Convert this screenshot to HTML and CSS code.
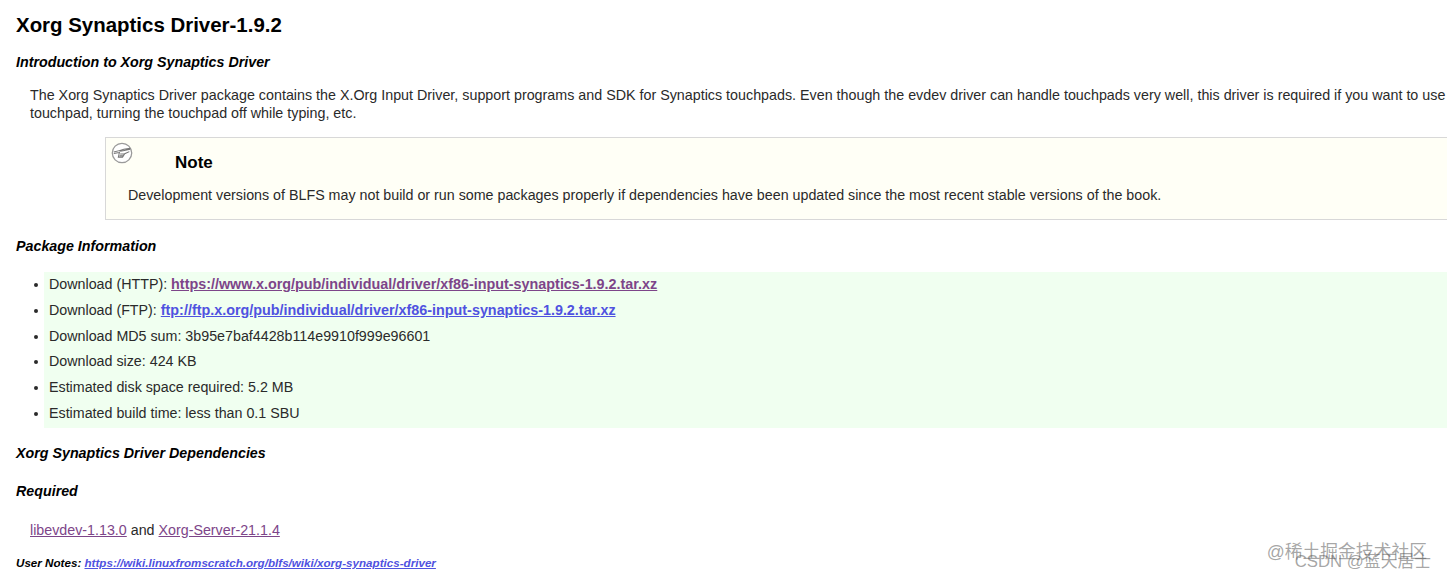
FILE: index.html
```html
<!DOCTYPE html>
<html lang="en">
<head>
<meta charset="utf-8">
<title>Xorg Synaptics Driver-1.9.2</title>
<link rel="stylesheet" href="styles.css">
</head>
<body>
<main class="page">
<h1 class="title">Xorg Synaptics Driver-1.9.2</h1>
<h2 class="sub first">Introduction to Xorg Synaptics Driver</h2>
<p class="para intro">The Xorg Synaptics Driver package contains the X.Org Input Driver, support programs and SDK for Synaptics touchpads. Even though the evdev driver can handle touchpads very well, this driver is required if you want to use advanced features such as multitouch, scrolling on the<br>touchpad, turning the touchpad off while typing, etc.</p>
<aside class="note">
<svg class="note-icon" viewBox="0 0 24 24" width="22" height="22" aria-hidden="true">
<circle cx="12" cy="12" r="10.6" fill="#fff" stroke="#9a9a9a" stroke-width="1.4"/>
<path d="M3 11 L9 9.4 L14 8 L20.5 7 L20.5 8 L14.5 9.2 L10 10 M3 12.5 L9 11.5 M9.4 10.6 L8 16.5 L12.6 16.5 L15 12.8 L20 10.5 M10 13 H14.4 M9.3 15 H13.4" fill="none" stroke="#757575" stroke-width="1.1"/>
</svg>
<h3 class="note-title">Note</h3>
<p class="note-text">Development versions of BLFS may not build or run some packages properly if dependencies have been updated since the most recent stable versions of the book.</p>
</aside>
<h2 class="sub pkg">Package Information</h2>
<ul class="pkg-list">
<li>Download (HTTP): <a class="visited strong" href="#a">https://www.x.org/pub/individual/driver/xf86-input-synaptics-1.9.2.tar.xz</a></li>
<li>Download (FTP): <a class="fresh strong" href="#b">ftp://ftp.x.org/pub/individual/driver/xf86-input-synaptics-1.9.2.tar.xz</a></li>
<li>Download MD5 sum: 3b95e7baf4428b114e9910f999e96601</li>
<li>Download size: 424 KB</li>
<li>Estimated disk space required: 5.2 MB</li>
<li>Estimated build time: less than 0.1 SBU</li>
</ul>
<h2 class="sub deps">Xorg Synaptics Driver Dependencies</h2>
<h3 class="sub req">Required</h3>
<p class="para reqs"><a class="visited" href="#c">libevdev-1.13.0</a> and <a class="visited" href="#d">Xorg-Server-21.1.4</a></p>
<p class="notes"><b>User Notes:</b> <a class="fresh strong" href="#e">https://wiki.linuxfromscratch.org/blfs/wiki/xorg-synaptics-driver</a></p>
</main>
<div class="mark">
<div class="mark-a">@稀土掘金技术社区</div>
<div class="mark-b">CSDN @蓝天居士</div>
</div>
</body>
</html>
```
FILE: styles.css
```css
html, body {
  margin: 0;
  height: 580px;
  overflow: hidden;
  background: #fff;
}
body {
  position: relative;
  font-family: "Liberation Sans", Arial, sans-serif;
  font-size: 14.28px;
  color: #2a2a2a;
}
.page {
  width: 2000px;
  padding: 13px 0 0 16px;
}
.title {
  margin: 0;
  font-size: 20.46px;
  line-height: 24px;
  color: #000;
}
.sub {
  margin: 0;
  font-size: 14.28px;
  line-height: 17px;
  font-style: italic;
  font-weight: bold;
  color: #000;
}
.first { margin-top: 17px; }
.para {
  margin: 0;
  padding-left: 14px;
  line-height: 18px;
}
.intro { margin-top: 15px; white-space: nowrap; font-size: 14.31px; }
.note {
  position: relative;
  margin: 15px 0 0 89px;
  height: 83px;
  background: #fffff6;
  border: 1px solid #d8d8d8;
  border-right: 0;
  box-sizing: border-box;
}
.note-icon {
  position: absolute;
  left: 5px;
  top: 4px;
}
.note-title {
  margin: 15px 0 0 69px;
  font-size: 17px;
  line-height: 20px;
  color: #000;
}
.note-text {
  margin: 13px 0 0 22px;
  line-height: 18px;
}
.pkg { margin-top: 18px; }
.pkg-list {
  margin: 17px 0 0 28px;
  padding: 0 0 1.2px 5px;
  background: #f0fff0;
}
.pkg-list li {
  line-height: 25.8px;
}
.strong { font-weight: bold; }
.pkg-list .strong { font-size: 14.37px; }
.visited { color: #7d4589; }
.fresh { color: #4f52e0; }
.deps { margin-top: 17px; }
.req { margin-top: 21px; }
.reqs { margin-top: 21px; }
.notes {
  margin: 17px 0 0;
  font-size: 11.63px;
  line-height: 14px;
  font-style: italic;
  color: #000;
}
.mark {
  position: absolute;
  right: 16px;
  bottom: 9px;
  font-family: "Liberation Sans", "Noto Sans CJK SC", sans-serif;
  line-height: 18px;
  color: rgba(90, 90, 90, 0.55);
  text-align: right;
}
.mark-a { font-size: 17.8px; margin-bottom: -8px; margin-right: 4px; }
.mark-b { font-size: 16.8px; }
```
